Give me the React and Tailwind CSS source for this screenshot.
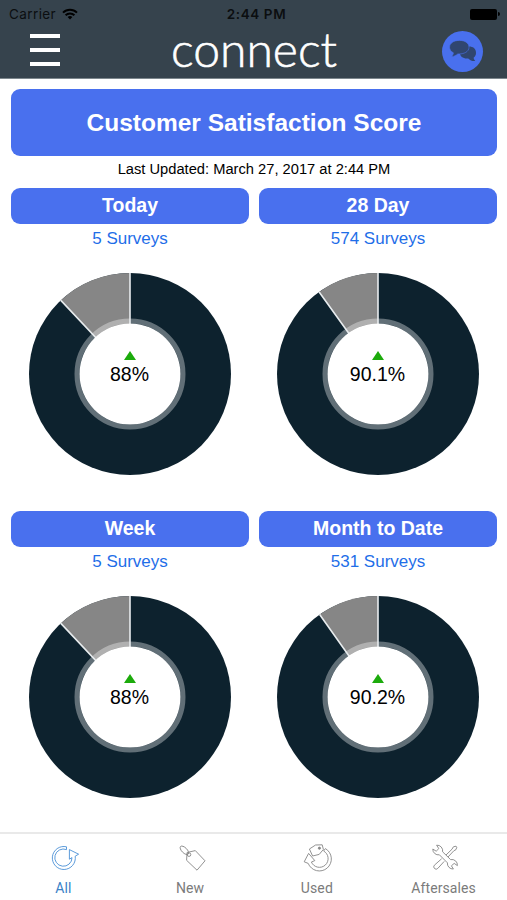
import React from "react";

const scores = [
  { title: "Today", surveys: 5, score: 88 },
  { title: "28 Day", surveys: 574, score: 90.1 },
  { title: "Week", surveys: 5, score: 88 },
  { title: "Month to Date", surveys: 531, score: 90.2 },
];

const AllIcon = () => (
  <svg viewBox="0 0 34 30" className="w-[34px] h-[30px]" fill="none" stroke="currentColor" strokeWidth="0.9" strokeLinejoin="round">
    <path d="M18.5 4.8 A11.5 11.5 0 1 0 27.2 14.2 L30.6 12.2 L21.4 7.6 V17.2 L24 15.6 A8.6 8.6 0 1 1 18.5 7.6 Z" />
  </svg>
);

const NewIcon = () => (
  <svg viewBox="0 0 34 30" className="w-[34px] h-[30px]" fill="none" stroke="currentColor" strokeWidth="0.9" strokeLinejoin="round">
    <path d="M12 10.5 L20.3 8.6 L30 18.8 L22 28.2 L11.6 18.3 Z" />
    <ellipse cx="9.4" cy="8.3" rx="5.4" ry="2.6" transform="rotate(45 9.4 8.3)" />
    <circle cx="14" cy="12.6" r="1.8" />
  </svg>
);

const UsedIcon = () => (
  <svg viewBox="0 0 34 30" className="w-[34px] h-[30px]" fill="none" stroke="currentColor" strokeWidth="0.9" strokeLinejoin="round">
    <path d="M8.4 7 L14.6 3 L21.2 2.8 L22.4 7.4 L18.2 12.4 L11.6 14 Z" />
    <circle cx="18.4" cy="6.2" r="1.1" fill="currentColor" />
    <path d="M24.4 6.6 A12 12 0 1 1 7.2 21.4 L3.2 19.8 L7.6 11.4 L13.8 18.6 L10.4 20 A8.7 8.7 0 1 0 22.6 9 Z" />
  </svg>
);

const AftersalesIcon = () => (
  <svg viewBox="0 0 34 30" className="w-[34px] h-[30px]" fill="none" stroke="currentColor" strokeWidth="0.9" strokeLinejoin="round">
    <path d="M18 13 L24 7.2 L25.4 4.8 L28 4.2 L28.8 5.2 L28 7.6 L25.8 8.8 L20 15 M16.2 19.4 L9.8 26.4 A2.2 2.2 0 0 1 6.4 23.2 L13.6 16.8" />
    <path d="M8.6 3.2 A5.6 5.6 0 0 1 14.6 9.8 L22.6 17.6 A5.6 5.6 0 0 1 29.4 23.6 L26.2 21.4 L23.4 23.8 L25.4 27 A5.6 5.6 0 0 1 19.4 20.8 L11.4 12.8 A5.6 5.6 0 0 1 4.8 7 L8.2 9.2 L10.8 6.6 Z" />
  </svg>
);

const tabs = [
  { label: "All", icon: AllIcon, color: "text-[#3b82c8]", iconColor: "text-[#4a90d6]" },
  { label: "New", icon: NewIcon, color: "text-[#7b7b7b]", iconColor: "text-[#868686]" },
  { label: "Used", icon: UsedIcon, color: "text-[#7b7b7b]", iconColor: "text-[#868686]" },
  { label: "Aftersales", icon: AftersalesIcon, color: "text-[#7b7b7b]", iconColor: "text-[#868686]" },
];

const StatusBar = () => (
  <div className="grid grid-cols-3 items-center h-7 pl-[9px] pr-[7px] text-[#0b0e10] font-['Inter',sans-serif]">
    <div className="flex items-center gap-[6px] text-[13.5px] tracking-[0.4px]">
      <span>Carrier</span>
      <svg viewBox="0 0 16 12" className="w-4 h-3" fill="none" stroke="black" strokeWidth="2">
        <path d="M1 4.6 A10 10 0 0 1 15 4.6 M3.6 7.3 A6.2 6.2 0 0 1 12.4 7.3" />
        <path d="M8 11.5 L5.6 9.1 A3.4 3.4 0 0 1 10.4 9.1 Z" fill="black" stroke="none" />
      </svg>
    </div>
    <span className="pl-1 text-center text-[13.5px] leading-4 font-semibold tracking-[0.6px]">2:44 PM</span>
    <div className="flex items-center justify-end gap-px">
      <div className="w-[27px] h-[11px] rounded-[2px] bg-black" />
      <div className="w-[2px] h-1 rounded-r-sm bg-black" />
    </div>
  </div>
);

const Header = () => (
  <header className="h-[79px] bg-[#36434d] border-b border-[#7d878d]">
    <StatusBar />
    <div className="flex items-center justify-between h-[46px] pl-[30px] pr-6">
      <button className="flex flex-col gap-[10px] w-10 pb-0.5">
        <span className="w-[30px] h-1 bg-white" />
        <span className="w-[30px] h-1 bg-white" />
        <span className="w-[30px] h-1 bg-white" />
      </button>
      <svg viewBox="0 0 168 46" className="w-[168px] h-[46px] overflow-visible">
        <text
          x="-1"
          y="38.5"
          textLength="166"
          lengthAdjust="spacingAndGlyphs"
          strokeWidth="0.6"
          className="font-['Lato',sans-serif] font-light text-[47px] fill-white stroke-white"
        >
          connect
        </text>
      </svg>
      <button className="flex items-center justify-center w-[41px] h-[41px] rounded-full bg-[#4970ee]">
        <svg viewBox="0 0 28 24" className="w-7 h-6">
          <path d="M27 14 C27 9.6 24 7.6 20 7.6 C14.5 7.6 11 10.6 11 14 C11 17.6 14.5 20 19.2 19.4 C21 21.2 23.6 22.4 26.2 22 C25.2 21 24.6 19.8 24.7 18.6 C26.2 17.4 27 16 27 14 Z" fill="#30466f" />
          <path d="M10.5 1.4 C4.6 1.4 0.6 4.2 0.6 8.2 C0.6 10.6 2 12.6 4.4 13.8 C4.3 15.2 3.6 16.4 2.6 17.6 C5 17.4 7 16.4 8.8 14.9 C15 15.3 20 12.8 20 8.2 C20 4.2 16.2 1.4 10.5 1.4 Z" fill="#30466f" stroke="#4970ee" strokeWidth="0.6" />
        </svg>
      </button>
    </div>
  </header>
);

const Donut = ({ value }) => {
  const angle = (value / 100) * Math.PI * 2;
  const x = 101 + 101 * Math.sin(angle);
  const y = 101 - 101 * Math.cos(angle);

  return (
    <svg viewBox="0 0 202 202" className="w-[202px] h-[202px]">
      <circle cx="101" cy="101" r="101" fill="#0d222e" />
      <path d={`M101 101 L${x} ${y} A101 101 0 0 1 101 0 Z`} fill="#868686" />
      <circle cx="101" cy="101" r="53" fill="none" stroke="white" strokeOpacity="0.35" strokeWidth="5" />
      <path d={`M101 0 V101 L${x} ${y}`} fill="none" stroke="#e8ecee" strokeWidth="1.6" />
      <circle cx="101" cy="101" r="50.5" fill="white" />
      <path d="M101 78 L107 87 H95 Z" fill="#1cab0c" />
      <text x="100.5" y="107.5" textAnchor="middle" className="text-[19.5px] fill-black">
        {value}%
      </text>
    </svg>
  );
};

const ScoreCard = ({ title, surveys, score }) => (
  <section className="flex flex-col items-center h-[323px]">
    <h2 className="flex items-center justify-center w-full h-9 rounded-[9px] bg-[#4970ee] text-white text-[19.5px] font-bold">
      {title}
    </h2>
    <p className="h-[49px] pt-[3px] text-[17px] leading-6 text-[#1f6ee8]">{surveys} Surveys</p>
    <Donut value={score} />
  </section>
);

const TabBar = () => (
  <nav className="grid grid-cols-4 h-[68px] border-t-2 border-[#e9e9e9] bg-white">
    {tabs.map(({ label, icon: Icon, color, iconColor }) => (
      <button key={label} className={`flex flex-col items-center pt-2 ${color}`}>
        <span className={`pl-[3px] ${iconColor}`}>
          <Icon />
        </span>
        <span className="mt-1.5 text-[14px] leading-5 font-['Roboto',sans-serif] tracking-[0.1px]">{label}</span>
      </button>
    ))}
  </nav>
);

const App = () => (
  <div className="flex flex-col h-screen bg-white font-['Liberation_Sans',Arial,sans-serif]">
    <Header />
    <main className="flex-1 min-h-0 px-[11px] pr-[10px] pt-[10px] overflow-hidden">
      <h1 className="flex items-center justify-center h-[67px] pt-0.5 rounded-[9px] bg-[#4970ee] text-white text-[24.5px] font-bold">
        Customer Satisfaction Score
      </h1>
      <p className="h-8 pt-[3px] text-center text-[14.7px] leading-5 text-black">
        Last Updated: March 27, 2017 at 2:44 PM
      </p>
      <div className="grid grid-cols-2 gap-x-[10px]">
        {scores.map((item) => (
          <ScoreCard key={item.title} {...item} />
        ))}
      </div>
    </main>
    <TabBar />
  </div>
);

export default App;
